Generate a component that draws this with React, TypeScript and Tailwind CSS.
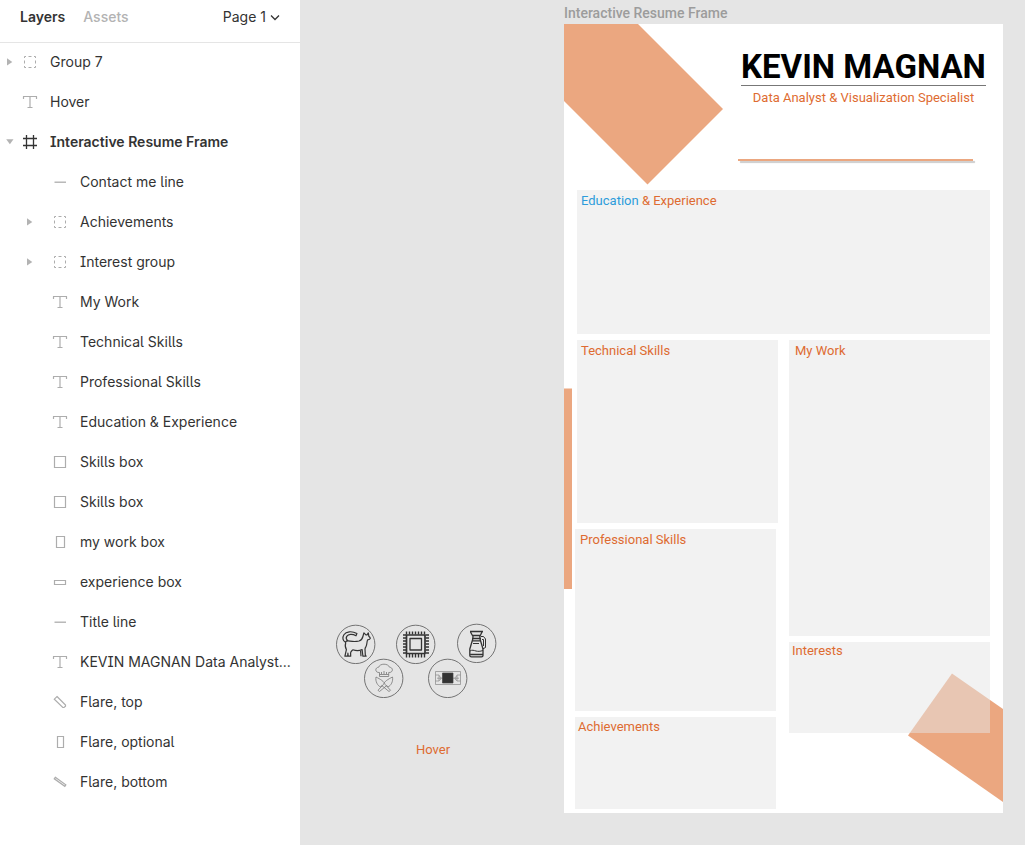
import type { ReactNode } from 'react';

type Kind = 'group' | 'text' | 'frame' | 'line' | 'square' | 'tall' | 'flat' | 'narrow' | 'tilt' | 'slope';

type Layer = { name: string; kind: Kind; depth: 0 | 1; caret?: 'open' | 'closed'; strong?: boolean };

const layers: Layer[] = [
  { name: 'Group 7', kind: 'group', depth: 0, caret: 'closed' },
  { name: 'Hover', kind: 'text', depth: 0 },
  { name: 'Interactive Resume Frame', kind: 'frame', depth: 0, caret: 'open', strong: true },
  { name: 'Contact me line', kind: 'line', depth: 1 },
  { name: 'Achievements', kind: 'group', depth: 1, caret: 'closed' },
  { name: 'Interest group', kind: 'group', depth: 1, caret: 'closed' },
  { name: 'My Work', kind: 'text', depth: 1 },
  { name: 'Technical Skills', kind: 'text', depth: 1 },
  { name: 'Professional Skills', kind: 'text', depth: 1 },
  { name: 'Education & Experience', kind: 'text', depth: 1 },
  { name: 'Skills box', kind: 'square', depth: 1 },
  { name: 'Skills box', kind: 'square', depth: 1 },
  { name: 'my work box', kind: 'tall', depth: 1 },
  { name: 'experience box', kind: 'flat', depth: 1 },
  { name: 'Title line', kind: 'line', depth: 1 },
  { name: 'KEVIN MAGNAN Data Analyst...', kind: 'text', depth: 1 },
  { name: 'Flare, top', kind: 'tilt', depth: 1 },
  { name: 'Flare, optional', kind: 'narrow', depth: 1 },
  { name: 'Flare, bottom', kind: 'slope', depth: 1 },
];

const glyphs: Record<Kind, ReactNode> = {
  group: <path d="M2.500 4V2.500H4M6.500 2.500h3M12 2.500h1.500V4M13.500 6.500v3M13.500 12v1.500H12M9.500 13.500h-3M4 13.500H2.500V12M2.500 9.500v-3" />,
  text: (
    <>
      <path d="M1 2.500h14M5.500 13.500h5" strokeWidth="1.200" />
      <path d="M1.500 2.500V5M14.500 2.500V5M8 2.500v11" strokeWidth="1.200" />
    </>
  ),
  frame: <path d="M4.500 1v14M11.500 1v14M1 4.500h14M1 11.500h14" strokeWidth="1.300" />,
  line: <path d="M2.500 8.200h11.500" strokeWidth="1.300" />,
  square: <path d="M2.500 2.500h11v11h-11z" strokeWidth="1.200" />,
  tall: <path d="M4.500 2.500h8v11h-8z" strokeWidth="1.200" />,
  flat: <path d="M2.500 6.500h11v4h-11z" strokeWidth="1.200" />,
  narrow: <path d="M5.500 2.500h6v11h-6z" strokeWidth="1.200" />,
  tilt: <path d="M5 2.500 13.500 11v1.200L12 13.500h-1.200L2.300 5.200z" strokeWidth="1.200" />,
  slope: <path d="M3.300 3.300 13.800 10.800 12.800 12.400 2.300 4.800z" strokeWidth="1.300" />,
};

function LayerIcon({ kind }: { kind: Kind }) {
  return (
    <svg viewBox="0 0 16 16" className="size-4 shrink-0" fill="none" stroke="currentColor" aria-hidden="true">
      {glyphs[kind]}
    </svg>
  );
}

function LayerRow({ layer }: { layer: Layer }) {
  return (
    <li className={`flex h-10 items-center ${layer.depth ? 'pl-6' : 'pl-1'}`}>
      <span className="flex w-[18px] shrink-0">
        {layer.caret && (
          <button type="button" aria-label={`Toggle ${layer.name}`} aria-expanded={layer.caret === 'open'} className="text-[#b3b3b3]">
            <svg viewBox="0 0 12 12" className="size-3" fill="currentColor" aria-hidden="true">
              {layer.caret === 'open' ? <path d="M2.200 3.200h7.300L5.900 8.200z" /> : <path d="M3 2.300v7.200l5.300-3.600z" />}
            </svg>
          </button>
        )}
      </span>
      <span className={`flex ${layer.depth ? 'w-[38px] pl-[10px]' : 'w-7'} shrink-0 ${layer.strong ? 'text-[#333333]' : 'text-[#adadad]'}`}>
        <LayerIcon kind={layer.kind} />
      </span>
      <span className={`whitespace-nowrap ${layer.strong ? 'font-semibold' : ''}`}>{layer.name}</span>
    </li>
  );
}

function Sidebar() {
  return (
    <aside className="w-[300px] shrink-0 bg-white text-sm text-[#333333] font-['Inter',sans-serif] [font-feature-settings:'cv05','cv08']">
      <header className="flex h-[42px] items-start pt-[7px] pr-5 pl-5 leading-5 shadow-[0_1px_0_#e5e5e5]">
        <button type="button" className="mr-[18px] font-semibold">Layers</button>
        <button type="button" className="font-medium text-[#b3b3b3]">Assets</button>
        <button type="button" className="ml-auto flex items-center gap-1">
          Page 1
          <svg viewBox="0 0 10 10" className="size-[10px]" fill="none" stroke="currentColor" strokeWidth="1.300" aria-hidden="true">
            <path d="m1 3.500 4 4 4-4" />
          </svg>
        </button>
      </header>
      <ul>
        {layers.map((layer, i) => (
          <LayerRow key={i} layer={layer} />
        ))}
      </ul>
    </aside>
  );
}

function Badge({ place, children }: { place: string; children: ReactNode }) {
  return (
    <svg viewBox="0 0 40 40" className={`absolute size-10 ${place}`} fill="none" stroke="#333333" strokeLinejoin="round" aria-hidden="true">
      <circle cx="19.700" cy="20.400" r="19.200" stroke="#666666" strokeWidth="0.900" />
      {children}
    </svg>
  );
}

const pins = [10.5, 13.5, 16.5, 19.5, 22.5, 25.5, 28.5];

function InterestIcons() {
  return (
    <>
      <Badge place="top-[624px] left-[36px]">
        <path
          d="M9.500 17.800c.8-.9 2.500-1 4.500-.7 2.500.4 6 .6 9-.1 2.500-.7 3.400-2.300 3.900-4.500l1-3.700 2 2h1.300l1.100-1.900.5 3.300c.8.600 1.500 1.400 1.500 2.200-.3 1.100-1.700 1.400-2.700 1.500-.8 2-.6 4.200-1.400 6.200-.5 1.200-1.200 1.900-1.200 3.100l.3 5.500.8 1.500h-3.200l-.8-6.600c-2.600 1.200-6 1.300-9.300.2-1.100 1.200-2.100 1.800-2.200 3.200l.1 3.200h-2.500l-.3-3-.2 3H8.900l1.500-6.600c-1.300-2-1.300-4.800-.7-7-3-1.900-3.600-5-1.800-7.800 2.200-3.400 7.900-4.200 13-1.200l-.9 2.200c-3.600-2-7.700-1.800-9.300.6-1.100 1.700-.4 3.100 1.200 4.700M24.500 25.700l.5 6.500"
          strokeWidth="1.200"
        />
      </Badge>
      <Badge place="top-[624px] left-[96px]">
        <path d="M10.500 11h18.500v18.500H10.500z" strokeWidth="1.700" />
        <path d="M14 14.500h11.500V26H14z" strokeWidth="1.300" />
        {pins.map((p) => (
          <path key={p} d={`M${p} 7.500v3M${p} 30v3.500M7 ${p + 0.5}h3M29.500 ${p + 0.5}h3.500`} strokeWidth="1.400" />
        ))}
      </Badge>
      <Badge place="top-[623px] left-[157px]">
        <path d="M13 8.500h13M13.500 9l2.500 4.500-.2 2.500-3 10v6.500c0 1 1 1.300 1.700 1.300h10c1 0 1.500-.5 1.500-1.300V26l-3-10-.2-2.500L25 9M15.500 12.500h8.500M15 15.500h9M15 17.800h9M13.500 31.500h12.500" strokeWidth="1.300" />
        <path d="M24 13.500h2.500l2 2.500v8.500L25.500 26M25 16.500h1.500v6.500M13 28c2-1.500 4-.5 6 0s4 .5 7-.5M16 20.500h6" />
      </Badge>
      <Badge place="top-[658px] left-[64px]">
        <g stroke="#777777" strokeWidth="0.800">
          <path d="M15.500 18.500v-4c-4.500.5-5-5-.8-5.300 1-4 9.500-4 10.800 0 4.200.3 3.700 5.800-.8 5.300v4zM15.500 16.500h9.200M17.500 16v-2M20 16v-3M22.500 16v-2" />
          <path d="M12 19c-.8 4.500 1.500 8.500 4.500 10l1.200-1.500 7.300 6 1.500-1.200-5.500-6c-1-3-4.500-5-9-7.300M28.500 19c.8 4.500-1.500 8.500-4.500 10l-1.200-1.500-7.300 6-1.500-1.200 5.500-6c1-3 4.500-5 9-7.300" />
        </g>
      </Badge>
      <Badge place="top-[658px] left-[128px]">
        <g stroke="#888888" strokeWidth="0.700">
          <path d="M7.500 13.500H32.500v13H7.500zM7.500 17h3.500v6H7.500M32.500 17h-3.500v6h3.500M11 18c2.500.5 2.500 4 0 4.500M29 18c-2.500.5-2.500 4 0 4.500M9 20.200h22" />
          <path d="M14.500 15h10.500v10H14.500z" fill="#333333" stroke="#444444" />
        </g>
      </Badge>
    </>
  );
}

function Panel({ title, className }: { title: ReactNode; className: string }) {
  return (
    <section className={`bg-[#e5e5e5]/50 ${className}`}>
      <h2 className="leading-4">{title}</h2>
    </section>
  );
}

function ResumeFrame() {
  return (
    <article className="absolute top-[4px] left-[264px] w-[439px] font-['Roboto',sans-serif] text-[13px] text-[#de6b31]">
      <p className="h-5 text-sm leading-[18px] font-medium text-[#9c9c9c]">Interactive Resume Frame</p>
      <div className="relative overflow-hidden bg-white pr-[13px] pb-1 pl-[11px]">
        <svg className="absolute inset-0 size-full" fill="#eba780" aria-hidden="true">
          <path d="M0 0h74l85 85-75.500 75.500L0 77z" />
          <path d="M0 364.500h8v200.500H0z" />
          <path d="M388 649.500 344 711.500l95 66.500v-93z" />
        </svg>
        <header className="relative flex h-[166px] flex-col items-end pt-[25px] pr-1">
          <div className="flex w-[245px] flex-col items-center">
            <h1 className="w-full border-b border-[#777777] text-center text-[33px] leading-9 font-bold whitespace-nowrap text-black">KEVIN MAGNAN</h1>
            <p className="pt-[2px] leading-5 whitespace-nowrap">Data Analyst &amp; Visualization Specialist</p>
          </div>
          <hr className="mt-[51px] mr-[13px] h-[2px] w-[235px] border-0 bg-[#eba780] shadow-[2px_2px_1px_#cccccc]" />
        </header>
        <div className="relative flex flex-col gap-[6px]">
          <Panel
            className="ml-[2px] h-[144px] pt-[3px] pl-1"
            title={<><span className="text-[#2d9cdb]">Education</span> &amp; Experience</>}
          />
          <div className="flex justify-between">
            <div className="flex w-[203px] flex-col gap-[6px]">
              <Panel className="ml-[2px] h-[183px] pt-[3px] pl-1" title="Technical Skills" />
              <Panel className="mr-[2px] h-[182px] pt-[3px] pl-[5px]" title="Professional Skills" />
              <Panel className="mr-[2px] h-[92px] pt-[2px] pl-[3px]" title="Achievements" />
            </div>
            <div className="flex w-[201px] flex-col gap-[6px]">
              <Panel className="h-[296px] pt-[3px] pl-[6px]" title="My Work" />
              <Panel className="h-[91px] pt-px pl-[3px]" title="Interests" />
            </div>
          </div>
        </div>
      </div>
    </article>
  );
}

export default function App() {
  return (
    <div className="flex min-h-screen">
      <Sidebar />
      <main className="relative min-w-0 flex-1 overflow-hidden bg-[#e5e5e5]">
        <InterestIcons />
        <p className="absolute top-[742px] left-[116px] font-['Roboto',sans-serif] text-[13px] leading-4 text-[#de6b31]">Hover</p>
        <ResumeFrame />
      </main>
    </div>
  );
}
